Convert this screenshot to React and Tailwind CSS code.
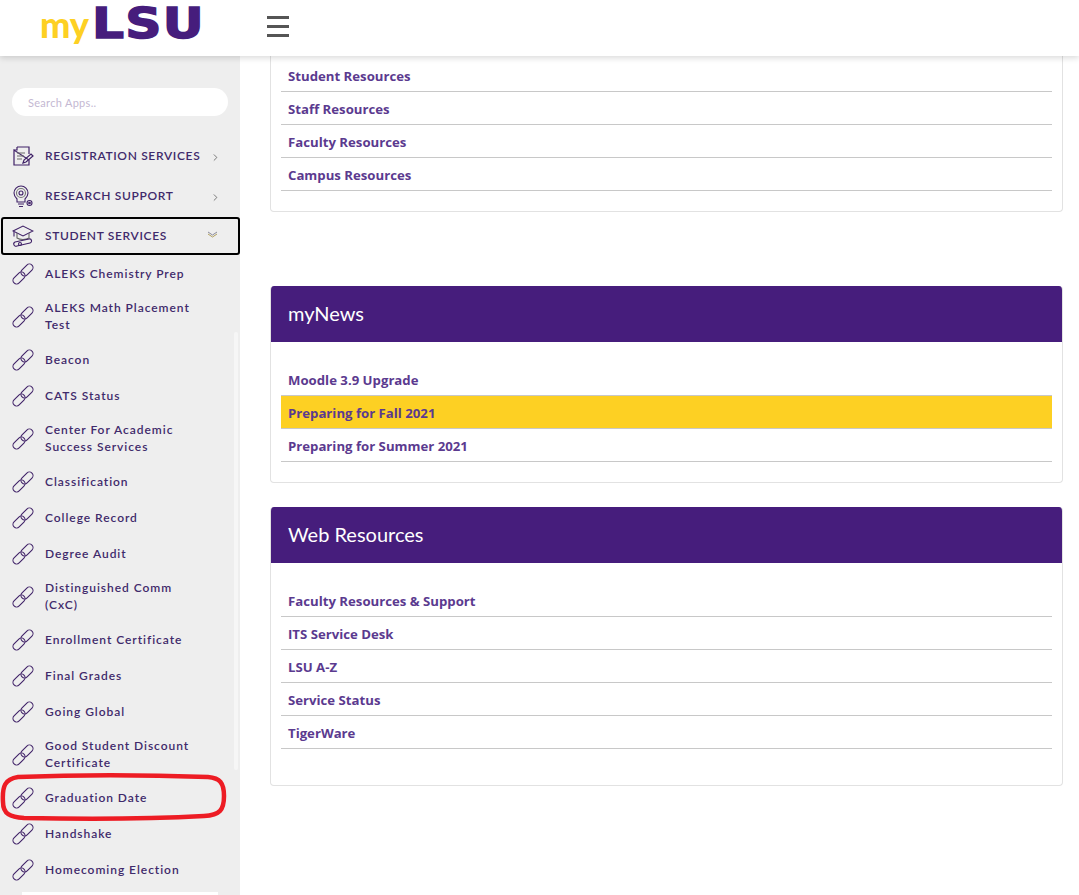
import { ChevronRight } from 'lucide-react';

const apps = [
  { name: ['ALEKS Chemistry Prep'] },
  { name: ['ALEKS Math Placement', 'Test'] },
  { name: ['Beacon'] },
  { name: ['CATS Status'] },
  { name: ['Center For Academic', 'Success Services'] },
  { name: ['Classification'] },
  { name: ['College Record'] },
  { name: ['Degree Audit'] },
  { name: ['Distinguished Comm', '(CxC)'] },
  { name: ['Enrollment Certificate'] },
  { name: ['Final Grades'] },
  { name: ['Going Global'] },
  { name: ['Good Student Discount', 'Certificate'] },
  { name: ['Graduation Date'] },
  { name: ['Handshake'] },
  { name: ['Homecoming Election'] },
];

const LinkIcon = () => (
  <svg width="22" height="22" viewBox="0 0 22 22" fill="none" stroke="#3f2167" strokeWidth="1.1" className="shrink-0">
    <rect x="-7" y="-3.600" width="14" height="7.200" rx="3.600" transform="translate(7 15) rotate(-45)" />
    <rect x="-7" y="-3.600" width="14" height="7.200" rx="3.600" transform="translate(15 7) rotate(-45)" />
  </svg>
);

const RegIcon = () => (
  <svg width="22" height="22" viewBox="0 0 22 22" fill="none" stroke="#3f2167" strokeWidth="1.2" className="shrink-0">
    <path d="M5 2h12v7M17 15v5H2V5z" />
    <path d="M5 2v3H2" />
    <path d="M5 8h8M5 11h7M5 14h5" stroke="#6b6b6b" />
    <path d="M11 18l1-3 7-6 2 2-7 6z" />
  </svg>
);

const BulbIcon = () => (
  <svg width="22" height="24" viewBox="0 0 22 24" fill="none" stroke="#3f2167" strokeWidth="1.1" className="shrink-0">
    <path d="M5 15c-2-2-3-4-3-6a7 7 0 0 1 14 0c0 2-1 4-3 6v3H5z" />
    <circle cx="9" cy="9" r="4.500" stroke="#777" />
    <circle cx="9" cy="9" r="2" />
    <path d="M6 20h6M7 22.500h4" />
    <circle cx="17.500" cy="19" r="2.500" />
    <circle cx="17.500" cy="19" r=".8" fill="#3f2167" />
  </svg>
);

const CapIcon = () => (
  <svg width="22" height="24" viewBox="0 0 22 24" fill="none" stroke="#3f2167" strokeWidth="1.1" className="shrink-0">
    <path d="M1 7l10-5 10 5-10 5z" />
    <path d="M5 9v5c3 2 9 2 12 0V9" stroke="#666" />
    <path d="M2 7.500v5" />
    <path d="M3 18l14-3a2 2 0 0 1 1 4L5 22a2 2 0 0 1-2-4z" />
    <circle cx="8" cy="20" r="1.500" />
  </svg>
);

const Grupo = ({ Icon, label, open }) => (
  <div className={`flex items-center ${open ? 'ml-px h-[38px] my-px pl-[9px] border-2 border-black rounded-[3px]' : 'h-10 pl-3'}`}>
    <Icon />
    <span className="ml-[11px] flex-1 font-['Lato',sans-serif] text-[12px] font-semibold tracking-[0.65px] text-[#3f2a6b] whitespace-nowrap">{label}</span>
    {open
      ? (
        <svg width="11" height="7" viewBox="0 0 11 7" fill="none" strokeWidth="1" className="mr-[20px] mb-1">
          <path d="M1 1l4.500 3L10 1" stroke="#8a8a9a" />
          <path d="M1 3l4.500 3L10 3" stroke="#b0a060" />
        </svg>
      )
      : <ChevronRight size={11} strokeWidth={1.5} className="text-[#444] mr-[19px] mt-[2px]" />}
  </div>
);

const Fila = ({ text, activo }) => (
  <a className={`flex items-center h-[33px] pl-[7px] pt-1 border-b border-[#c8c8c8] font-['Open_Sans',sans-serif] text-[13.2px] font-bold text-[#5b3a8f] ${activo ? 'bg-[#fdd023]' : ''}`}>
    {text}
  </a>
);

const Card = ({ title, rows, activo, className, pie }) => (
  <section className={`border border-t-0 border-[#e2e2e2] rounded-[4px] overflow-hidden ${className}`}>
    <h3 className="flex items-center h-14 pl-[17px] pb-[3px] bg-[#461d7c] text-white font-['Lato',sans-serif] text-[20px]">{title}</h3>
    <div className={`px-[10px] pt-[21px] ${pie}`}>
      {rows.map(r => <Fila key={r} text={r} activo={r === activo} />)}
    </div>
  </section>
);

export default function App() {
  return (
    <div className="relative h-[895px] overflow-hidden bg-white flex flex-col">
      <header className="relative z-10 h-14 shrink-0 flex items-center bg-white shadow-[0_2px_6px_rgba(0,0,0,0.15)]">
        <div className="w-[267px] pl-[40px] -mt-[8px] flex items-baseline">
          <span className="font-['Lato',sans-serif] font-black text-[36px] leading-[45px] text-[#fdd023]">my</span>
          <span className="ml-[3px] font-['DejaVu_Sans',sans-serif] font-bold text-[43px] leading-[45px] tracking-[1px] text-[#461d7c] inline-block origin-left scale-x-[1.17] [-webkit-text-stroke:1.5px_#461d7c]">LSU</span>
        </div>
        <div className="flex flex-col gap-[6px] -mt-1">
          <span className="block w-[22px] h-[3px] bg-[#555]" />
          <span className="block w-[22px] h-[3px] bg-[#555]" />
          <span className="block w-[22px] h-[3px] bg-[#555]" />
        </div>
      </header>

      <div className="flex flex-1 min-h-0">
        <aside className="relative w-60 shrink-0 bg-[#eeeeee] overflow-hidden">
          <div className="pt-8 px-3">
            <input
              placeholder="Search Apps.."
              className="block w-[216px] h-7 rounded-full bg-white pl-4 font-['Lato',sans-serif] text-[11px] tracking-[0.3px] outline-none placeholder:text-[#c4b8d2]"
            />
          </div>
          <nav className="mt-5">
            <Grupo Icon={RegIcon} label="REGISTRATION SERVICES" />
            <Grupo Icon={BulbIcon} label="RESEARCH SUPPORT" />
            <Grupo Icon={CapIcon} label="STUDENT SERVICES" open />
            {apps.map(a => (
              <div key={a.name[0]} className={`flex items-center pl-3 ${a.name.length > 1 ? 'h-[50px]' : 'h-9'}`}>
                <LinkIcon />
                <span className={`ml-[11px] font-['Lato',sans-serif] text-[12px] leading-[17px] font-semibold tracking-[0.95px] text-[#3f2a6b] ${a.name.length > 1 ? '-mt-[2px]' : '-mt-px'}`}>
                  {a.name.map(l => <span key={l} className="block whitespace-nowrap">{l}</span>)}
                </span>
              </div>
            ))}
            <div className="mx-[22px] mt-1 h-[3px] bg-white" />
          </nav>
          {/* barra de scroll */}
          <div className="absolute left-[234px] top-[276px] w-1 h-[438px] bg-[#f6f6f6] rounded-full" />
        </aside>

        <main className="flex-1 pl-[30px] pr-4 overflow-hidden">
          <section className="border border-t-0 border-[#e2e2e2] rounded-b-[4px] px-[10px] pt-[3px] pb-5">
            {['Student Resources', 'Staff Resources', 'Faculty Resources', 'Campus Resources'].map(r => <Fila key={r} text={r} />)}
          </section>
          <Card
            className="mt-[74px]"
            pie="pb-5"
            title="myNews"
            rows={['Moodle 3.9 Upgrade', 'Preparing for Fall 2021', 'Preparing for Summer 2021']}
            activo="Preparing for Fall 2021"
          />
          <Card
            className="mt-6"
            pie="pb-[36px]"
            title="Web Resources"
            rows={['Faculty Resources & Support', 'ITS Service Desk', 'LSU A-Z', 'Service Status', 'TigerWare']}
          />
        </main>
      </div>

      {/* anotacion roja sobre Graduation Date */}
      <svg className="absolute left-0 top-[772px] z-20" width="230" height="50" viewBox="0 0 230 50" fill="none">
        <path d="M18 5 C70 3 150 3 208 5 C220 6 224 11 224 24 C224 38 220 43 204 44 C150 47 70 47 24 46 C10 45 3 42 3 30 C2 14 5 7 18 5 Z" stroke="#ed1c24" strokeWidth="4.500" />
      </svg>
    </div>
  );
}
